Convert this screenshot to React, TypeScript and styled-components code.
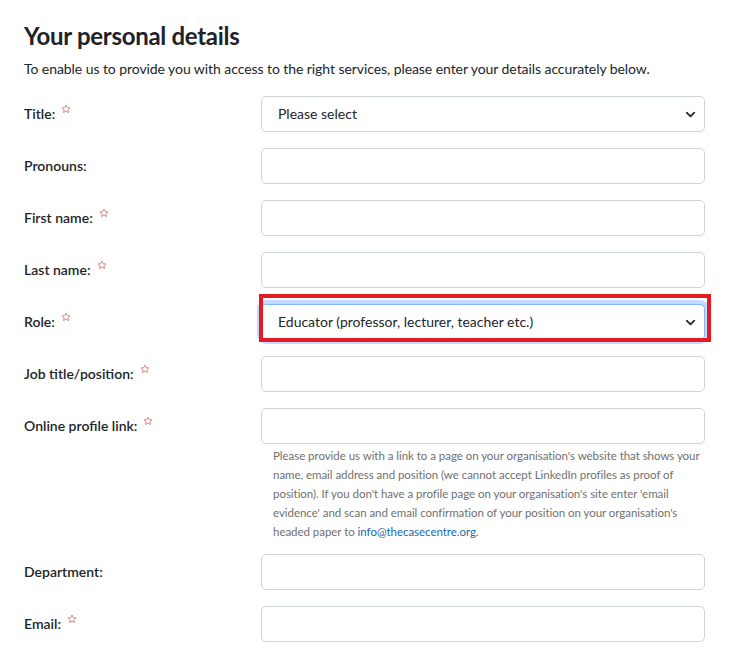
import styled, { createGlobalStyle } from 'styled-components'
import { ChevronDown } from 'lucide-react'

const GlobalStyle = createGlobalStyle`
  html, body {
    margin: 0;
    padding: 0;
    background: #fff;
  }
  body {
    font-family: Lato, 'Open Sans', sans-serif;
    color: #212529;
  }
`

interface IField {
  label: string
  required?: boolean
  kind: 'select' | 'text'
  value?: string
  focused?: boolean
  help?: boolean
}

const fields: IField[] = [
  { label: 'Title:', required: true, kind: 'select', value: 'Please select' },
  { label: 'Pronouns:', kind: 'text' },
  { label: 'First name:', required: true, kind: 'text' },
  { label: 'Last name:', required: true, kind: 'text' },
  {
    label: 'Role:',
    required: true,
    kind: 'select',
    value: 'Educator (professor, lecturer, teacher etc.)',
    focused: true,
  },
  { label: 'Job title/position:', required: true, kind: 'text' },
  { label: 'Online profile link:', required: true, kind: 'text', help: true },
  { label: 'Department:', kind: 'text' },
  { label: 'Email:', required: true, kind: 'text' },
]

const RequiredStar = () => (
  <Star viewBox='0 0 24 24' width='10' height='10'>
    <path
      d='M12 2.5l2.9 6.2 6.6.7-5 4.5 1.4 6.6L12 17.1l-5.9 3.4 1.4-6.6-5-4.5 6.6-.7z'
      fill='none'
      stroke='#e07a7a'
      strokeWidth='2.2'
      strokeLinejoin='round'
    />
  </Star>
)

export default function App() {
  return (
    <>
      <GlobalStyle />
      <Page>
        <Heading>Your personal details</Heading>
        <Intro>
          To enable us to provide you with access to the right services, please
          enter your details accurately below.
        </Intro>

        <Form>
          {fields.map(field => (
            <Row key={field.label}>
              <Label>
                {field.label}
                {field.required && <RequiredStar />}
              </Label>
              <Control>
                {field.kind === 'select' ? (
                  <SelectWrap $highlighted={field.focused}>
                    <SelectBox $focused={field.focused}>
                      <span>{field.value}</span>
                      <ChevronDown size={15} strokeWidth={2.8} />
                    </SelectBox>
                  </SelectWrap>
                ) : (
                  <TextInput type='text' />
                )}
                {field.help && (
                  <Help>
                    Please provide us with a link to a page on your
                    organisation's website that shows your name, email address
                    and position (we cannot accept LinkedIn profiles as proof of
                    position). If you don't have a profile page on your
                    organisation's site enter 'email evidence' and scan and
                    email confirmation of your position on your organisation's
                    headed paper to{' '}
                    <HelpLink href='#'>info@thecasecentre.org</HelpLink>.
                  </Help>
                )}
              </Control>
            </Row>
          ))}
        </Form>
      </Page>
    </>
  )
}

const Page = styled.div`
  padding: 20px 24px 0 24px;
  width: 681px;
`

const Heading = styled.h2`
  margin: 0;
  font-size: 24px;
  line-height: 32px;
  font-weight: 700;
  color: #1f2229;
  letter-spacing: -0.3px;
`

const Intro = styled.p`
  margin: 6px 0 0 0;
  font-size: 14px;
  line-height: 22px;
  color: #212529;
  letter-spacing: -0.07px;
`

const Form = styled.div`
  display: flex;
  flex-direction: column;
  gap: 16px;
  margin-top: 16px;
`

const Row = styled.div`
  display: grid;
  grid-template-columns: 237px 1fr;
  align-items: start;
`

const Label = styled.div`
  font-size: 14px;
  font-weight: 600;
  line-height: 36px;
  color: #212529;
  display: flex;
  align-items: flex-start;
`

const Star = styled.svg`
  margin: 8px 0 0 6px;
`

const Control = styled.div`
  display: flex;
  flex-direction: column;
`

const TextInput = styled.input`
  box-sizing: border-box;
  height: 36px;
  width: 100%;
  border: 1px solid #ced4da;
  border-radius: 5px;
  padding: 0 12px;
  font: inherit;
  background: #fff;
`

const SelectWrap = styled.div<{ $highlighted?: boolean }>`
  position: relative;

  &::after {
    content: '';
    display: ${({ $highlighted }) => ($highlighted ? 'block' : 'none')};
    position: absolute;
    top: -10px;
    bottom: -2px;
    left: -2px;
    right: -6px;
    border: 4px solid #e31b23;
    pointer-events: none;
  }
`

const SelectBox = styled.div<{ $focused?: boolean }>`
  box-sizing: border-box;
  height: 36px;
  display: flex;
  align-items: center;
  justify-content: space-between;
  padding: 0 6px 0 16px;
  border: 1px solid ${({ $focused }) => ($focused ? '#86b7fe' : '#ced4da')};
  border-radius: 5px;
  box-shadow: ${({ $focused }) =>
    $focused ? '0 0 0 4px rgba(13, 110, 253, 0.25)' : 'none'};
  font-size: 14px;
  line-height: 1;
  color: #212529;
  background: #fff;

  span {
    margin-top: -1px;
  }

  svg {
    color: #212529;
  }
`

const Help = styled.p`
  margin: 2px 0 -3px 0;
  padding: 0 0 0 12px;
  font-size: 11.5px;
  line-height: 19px;
  letter-spacing: -0.04px;
  color: #707070;
`

const HelpLink = styled.a`
  color: #1769aa;
  text-decoration: none;
`
